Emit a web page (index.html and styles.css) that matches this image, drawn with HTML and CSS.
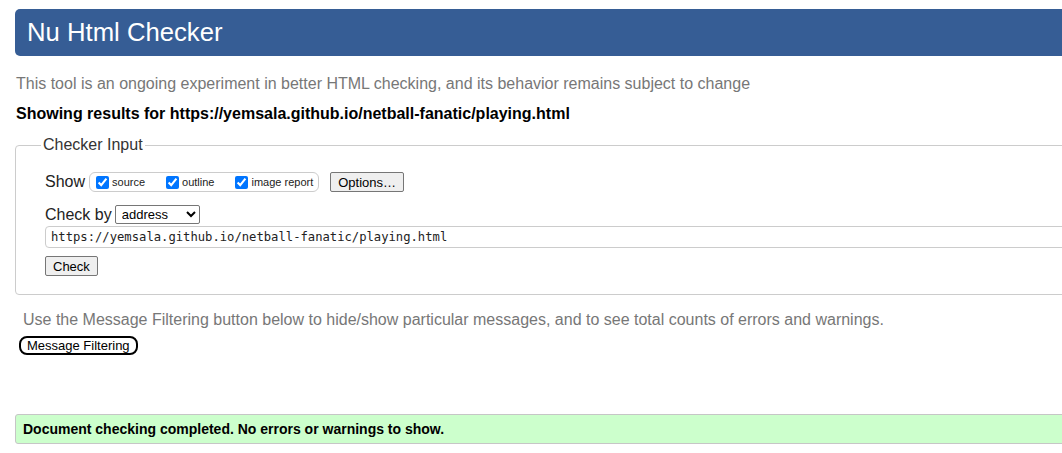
FILE: index.html
```html
<!DOCTYPE html>
<html lang="en">
<head>
<meta charset="utf-8">
<title>Nu Html Checker</title>
<link rel="stylesheet" href="styles.css">
</head>
<body>
<div class="page">
  <h1 class="banner">Nu Html Checker</h1>
  <p class="tagline">This tool is an ongoing experiment in better HTML checking, and its behavior remains subject to change</p>
  <p class="showing">Showing results for https://yemsala.github.io/netball-fanatic/playing.html</p>
  <fieldset class="input-box">
    <legend>Checker Input</legend>
    <div class="row show-row">
      <span class="lbl">Show</span>
      <span class="opts">
        <label class="opt"><input type="checkbox" checked> source</label>
        <label class="opt"><input type="checkbox" checked> outline</label>
        <label class="opt"><input type="checkbox" checked> image report</label>
      </span>
      <button class="btn">Options…</button>
    </div>
    <div class="row check-row">
      <span class="lbl">Check by</span>
      <select class="sel"><option>address</option></select>
    </div>
    <input class="url" type="text" value="https://yemsala.github.io/netball-fanatic/playing.html">
    <div class="row"><button class="btn">Check</button></div>
  </fieldset>
  <p class="filter-note">Use the Message Filtering button below to hide/show particular messages, and to see total counts of errors and warnings.</p>
  <button class="filter-btn">Message Filtering</button>
  <div class="success">Document checking completed. No errors or warnings to show.</div>
</div>
</body>
</html>
```

FILE: styles.css
```css
html, body {
  margin: 0;
  padding: 0;
  overflow: hidden;
  background: #fff;
}
body {
  font-family: "Liberation Sans", Arial, sans-serif;
  color: #000;
}
.page {
  width: 1120px;
  padding: 9px 0 0 15px;
}
.banner {
  margin: 0;
  height: 47px;
  box-sizing: border-box;
  padding: 0 0 0 12px;
  background: #365d95;
  color: #fff;
  font-weight: normal;
  font-size: 25.7px;
  line-height: 47px;
  border-radius: 5px;
}
.tagline {
  margin: 18px 0 0 1px;
  font-size: 16px;
  line-height: 20px;
  color: #777;
}
.showing {
  margin: 10px 0 0 1px;
  font-size: 16px;
  line-height: 20px;
  font-weight: bold;
}
.input-box {
  margin: 12px 0 0 0;
  border: 1px solid #ccc;
  border-radius: 4px;
  padding: 17px 0 18px 29px;
  min-width: 0;
}
.input-box legend {
  margin-left: -4px;
  padding: 0 2px 0 2px;
  font-size: 16px;
  color: #333;
}
.row {
  display: flex;
  align-items: center;
}
.lbl {
  font-size: 16px;
  color: #222;
}
.show-row {
  height: 22px;
}
.opts {
  margin-left: 4px;
  display: flex;
  align-items: center;
  height: 18px;
  padding: 0 5px 0 4px;
  border: 1px solid #ccc;
  border-radius: 6px;
  font-size: 11px;
  color: #222;
}
.opt {
  display: flex;
  align-items: center;
  margin-right: 19px;
}
.opt:last-child {
  margin-right: 0;
}
.opt input {
  margin: 0 3px 0 2px;
  width: 13px;
  height: 13px;
  accent-color: #0075ff;
}
.btn {
  margin-left: 11px;
  font-family: "Liberation Sans", Arial, sans-serif;
  font-size: 13px;
  padding: 1px 7px;
  height: 20px;
  background: #efefef;
  border: 1px solid #767676;
  border-radius: 2px;
  color: #000;
}
.check-row {
  margin-top: 12px;
}
.sel {
  margin-left: 3px;
  width: 85px;
  height: 19px;
  font-family: "Liberation Sans", Arial, sans-serif;
  font-size: 13px;
  border: 1px solid #767676;
  border-radius: 2px;
  background: #fff;
  color: #000;
  padding: 0 0 0 2px;
}
.url {
  display: block;
  margin-top: 2px;
  width: 1100px;
  height: 22px;
  box-sizing: border-box;
  border: 1px solid #ccc;
  border-radius: 4px;
  padding: 0 5px;
  font-family: "DejaVu Sans Mono", monospace;
  font-size: 12.2px;
  color: #222;
}
.input-box .row:last-child {
  margin-top: 8px;
}
.input-box .row:last-child .btn {
  margin-left: 0;
}
.filter-note {
  margin: 15px 0 0 8px;
  font-size: 16px;
  line-height: 20px;
  color: #777;
}
.filter-btn {
  display: block;
  margin: 6px 0 0 4px;
  height: 19px;
  padding: 0 6px;
  background: #fff;
  border: 2px solid #000;
  border-radius: 8px;
  font-family: "Liberation Sans", Arial, sans-serif;
  font-size: 13px;
  color: #000;
}
.success {
  margin-top: 59px;
  height: 30px;
  box-sizing: border-box;
  background: #ccffcc;
  border: 1px solid #c6c6c6;
  border-radius: 3px;
  padding-left: 7px;
  font-size: 14px;
  line-height: 28px;
  font-weight: bold;
}
```
